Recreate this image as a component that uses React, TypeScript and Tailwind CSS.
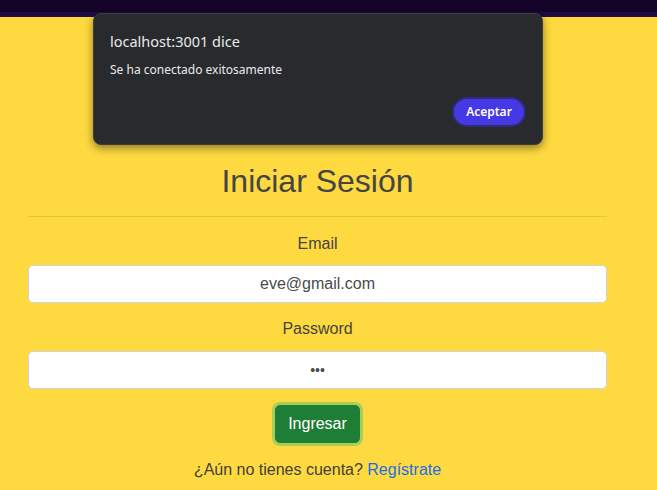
import React from "react";

export default function App() {
  return (
    <div className="relative min-h-[490px] bg-[#fed93f] font-['Liberation_Sans',Arial,sans-serif] text-[#444444]">
      <div className="h-[12px] bg-[#14042a]" />
      <div className="h-[5px] bg-[#200c44]" />

      <div className="ml-[28px] w-[579px] pt-[145px] text-center">
        <h1 className="text-[32px] leading-[38px] font-normal text-[#454545]">Iniciar Sesión</h1>
        <hr className="mt-[16px] border-0 border-t border-[#e3c43f]" />
        <label className="mt-[15px] block text-[16px] leading-[24px]">Email</label>
        <input
          readOnly
          defaultValue="eve@gmail.com"
          className="mt-[9px] block h-[38px] w-full rounded-[5px] border border-[#ced4da] bg-white text-center text-[16px] text-[#4a4a4a] outline-none font-['Liberation_Sans',Arial,sans-serif]"
        />
        <label className="mt-[14px] block text-[16px] leading-[24px]">Password</label>
        <input
          readOnly
          type="password"
          defaultValue="123"
          className="mt-[10px] block h-[38px] w-full rounded-[5px] border border-[#ced4da] bg-white text-center text-[14px] text-[#4a4a4a] outline-none font-['Liberation_Sans',Arial,sans-serif]"
        />
        <div className="mt-[16px] flex justify-center">
          <button className="h-[38px] rounded-[5px] border border-[#1f7e35] bg-[#1f7e35] px-[12px] text-[16px] text-white ring-[3px] ring-[#a7cf58]">
            Ingresar
          </button>
        </div>
        <p className="mt-[15px] text-[16px] leading-[24px] text-[#3f3f3f]">
          ¿Aún no tienes cuenta? <a className="text-[#1a6fe6]">Regístrate</a>
        </p>
      </div>

      <div className="absolute left-[93px] top-[13px] h-[132px] w-[450px] rounded-[8px] border border-[#3d3e42] bg-[#292a2d] px-[16px] font-['Noto_Sans','Open_Sans',sans-serif] text-[#e8eaed] shadow-[0_3px_8px_rgba(0,0,0,0.45)]">
        <div className="pt-[17px] text-[14.5px] leading-[20px]">localhost:3001 dice</div>
        <div className="mt-[11px] text-[12px] leading-[16px]">Se ha conectado exitosamente</div>
        <div className="mt-[19px] flex justify-end">
          <button className="h-[30px] w-[74px] rounded-full border-2 border-[#2f2c78] bg-[#4439e4] text-[12px] font-semibold text-white">
            Aceptar
          </button>
        </div>
      </div>
    </div>
  );
}
